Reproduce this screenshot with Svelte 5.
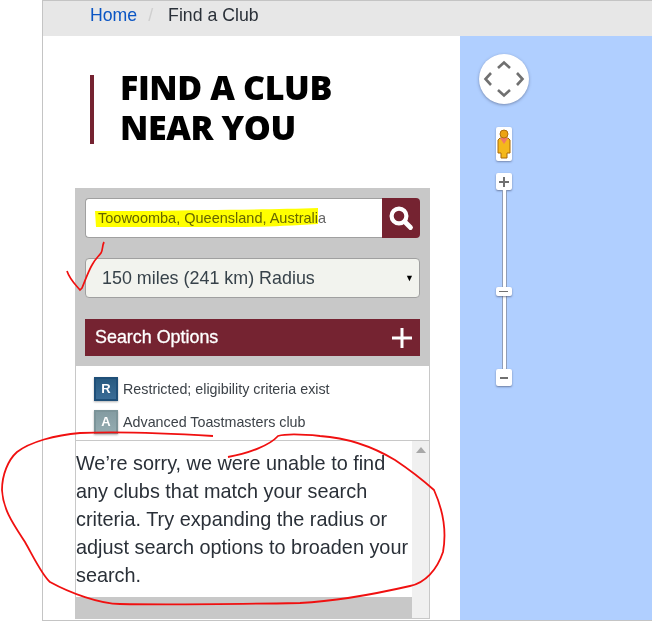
<script>
  const legend = [
    { key: 'R', text: 'Restricted; eligibility criteria exist', cls: 'blue' },
    { key: 'A', text: 'Advanced Toastmasters club', cls: 'grey' }
  ];
</script>

<div class="page">
  <nav class="crumbs">
    <a href="#home">Home</a><span class="sep">/</span><span>Find a Club</span>
  </nav>
  <div class="main">
    <section class="left">
      <h1><span>FIND A CLUB<br />NEAR YOU</span></h1>
      <div class="panel">
        <div class="search">
          <div class="input">Toowoomba, Queensland, Australia</div>
          <button class="go" aria-label="Search">
            <svg width="26" height="26" viewBox="0 0 26 26"><circle cx="11" cy="11" r="7.4" fill="none" stroke="#fff" stroke-width="4.2"/><path d="M17 17 22.5 22.5" stroke="#fff" stroke-width="4.8" stroke-linecap="round"/></svg>
          </button>
        </div>
        <div class="select"><span>150 miles (241 km) Radius</span><i>▼</i></div>
        <div class="options"><span>Search Options</span>
          <svg width="20" height="20" viewBox="0 0 20 20"><path d="M0 10H20M10 0V20" stroke="#fff" stroke-width="3"/></svg>
        </div>
      </div>
      <div class="results">
        <ul class="legend">
          {#each legend as item}
            <li><b class={item.cls}>{item.key}</b>{item.text}</li>
          {/each}
        </ul>
        <div class="scroll">
          <div class="content">
            <p>We’re sorry, we were unable to find any clubs that match your search criteria. Try expanding the radius or adjust search options to broaden your search.</p>
            <div class="strip"></div>
          </div>
          <div class="bar"><svg width="10" height="6" viewBox="0 0 10 6"><path d="M5 0 10 6H0Z" fill="#a8a8a8"/></svg></div>
        </div>
      </div>
    </section>
    <section class="map">
      <div class="pan">
        <svg width="50" height="50" viewBox="0 0 50 50" fill="none" stroke="#707070" stroke-width="2.6"><path d="M19 14 25 8.5 31 14M19 36 25 41.5 31 36M12 19 6.5 25 12 31M38 19 43.5 25 38 31"/></svg>
      </div>
      <div class="peg">
        <svg width="14" height="30" viewBox="0 0 14 30"><path d="M3 9H11L13 11V24H10V29H4V24H1V11Z" fill="#f4b81c" stroke="#a86808"/><path d="M3 9H11L7 15Z" fill="#f07868"/><circle cx="7" cy="5" r="4" fill="#eca414" stroke="#b07010"/></svg>
      </div>
      <div class="zoom">
        <div class="zbtn"><svg width="10" height="10" viewBox="0 0 10 10"><path d="M0 5H10M5 0V10" stroke="#707070" stroke-width="2"/></svg></div>
        <div class="track"><div class="thumb"><span></span></div></div>
        <div class="zbtn"><svg width="10" height="10" viewBox="0 0 10 10"><path d="M1 5H9" stroke="#707070" stroke-width="2"/></svg></div>
      </div>
    </section>
  </div>

  <svg class="ink" width="652" height="621" viewBox="0 0 652 621" fill="none">
    <path class="marker" d="M95 211C130 211 170 211 205 210C240 210 285 209 318 208V224C285 226 260 227 235 227C190 227 140 227 96 227Z" fill="#ffff00"/>
    <path d="M104 242C102 246 103 250 101 253C99 256 95 259 92 265C88 272 85 281 82 288L80 290C76 285 70 280 67 271" stroke="#f01010" stroke-width="1.7"/>
    <path d="M213 436C180 434 130 431 80 433C55 435 30 442 17 452C8 460 2 475 2 490C3 510 14 525 25 542C33 556 42 575 50 582C70 593 100 604 120 604C170 605 240 604 300 603C340 601 375 594 410 586C425 583 437 570 443 552C447 530 443 510 434 490C425 482 410 470 395 460C375 448 350 438 320 436C300 434 285 434 278 436C270 445 250 453 228 457" stroke="#f01010" stroke-width="1.8"/>
  </svg>
</div>

<style>
  :global(body) { margin: 0; background: #fff; }
  .page {
    position: relative;
    width: 652px;
    height: 621px;
    box-sizing: border-box;
    padding-left: 42px;
    overflow: hidden;
    font-family: "Liberation Sans", Arial, sans-serif;
  }
  .crumbs {
    box-sizing: border-box;
    height: 36px;
    padding: 0 0 6px 47px;
    display: flex;
    align-items: center;
    background: #e7e7e7;
    border-top: 1px solid #c4c4c4;
    border-left: 1px solid #c4c4c4;
    font-size: 17.7px;
    color: #2a3038;
  }
  .crumbs a { color: #0a55c4; text-decoration: none; }
  .sep { color: #cfcfcf; margin: 0 15px 0 11px; }
  .main {
    display: flex;
    height: 585px;
    border-left: 1px solid #c4c4c4;
    border-bottom: 1px solid #c4c4c4;
    box-sizing: border-box;
  }
  .left { width: 417px; padding-left: 32px; box-sizing: border-box; display: flow-root; }
  h1 {
    display: flow-root;
    margin: 39px 0 44px 15px;
    padding: 0 0 0 26px;
    height: 69px;
    border-left: 4px solid #752331;
    font-family: "Open Sans", sans-serif;
    font-weight: 800;
    font-size: 34px;
    line-height: 40px;
    letter-spacing: -0.4px;
    color: #000;
  }
  h1 span { display: block; margin-top: -8px; }
  .panel {
    width: 355px;
    box-sizing: border-box;
    background: #c8c8c8;
    padding: 10px;
  }
  .search { display: flex; height: 40px; }
  .input {
    flex: 1;
    box-sizing: border-box;
    background: #fff;
    border: 1px solid #a0a0a0;
    border-right: 0;
    border-radius: 4px 0 0 4px;
    padding-left: 12px;
    display: flex;
    align-items: center;
    font-size: 14.5px;
    color: #666;
  }
  .go {
    width: 38px;
    padding: 0;
    border: 0;
    border-radius: 0 4px 4px 0;
    background: #752331;
    display: flex;
    align-items: center;
    justify-content: center;
  }
  .select {
    box-sizing: border-box;
    height: 40px;
    margin-top: 20px;
    background: #f2f3ee;
    border: 1px solid #a0a0a0;
    border-radius: 4px;
    padding: 0 5px 0 16px;
    display: flex;
    align-items: center;
    justify-content: space-between;
    font-size: 17.9px;
    color: #37424a;
  }
  .select i { font-style: normal; font-size: 9px; color: #000; }
  .options {
    height: 37px;
    margin-top: 21px;
    background: #752331;
    color: #fff;
    padding: 0 8px 0 10px;
    display: flex;
    align-items: center;
    justify-content: space-between;
    font-size: 17.9px;
    -webkit-text-stroke: 0.3px #fff;
  }
  .results {
    width: 355px;
    height: 253px;
    box-sizing: border-box;
    background: #fff;
    border: 1px solid #c8c8c8;
    border-top: 0;
    display: flex;
    flex-direction: column;
  }
  .legend {
    list-style: none;
    margin: 0;
    padding: 10px 0 0 18px;
    height: 75px;
    box-sizing: border-box;
    border-bottom: 1px solid #c8c8c8;
    font-size: 14.3px;
    color: #3c4248;
  }
  .legend li { display: flex; align-items: center; height: 24px; margin-bottom: 8px; padding-top: 1px; }
  .legend b {
    width: 24px;
    height: 24px;
    box-sizing: border-box;
    margin: -1px 5px 0 0;
    display: flex;
    align-items: center;
    justify-content: center;
    font-size: 13px;
    color: #fff;
    box-shadow: 0 1px 2px rgba(0, 0, 0, .3);
  }
  .blue { background: linear-gradient(#285a80, #3a6c96); border: 2px solid #1f4f78; }
  .grey { background: linear-gradient(#849ca2, #93abb0); border: 2px solid #7c9499; }
  .scroll { flex: 1; display: flex; min-height: 0; }
  .content { width: 336px; display: flex; flex-direction: column; }
  p {
    margin: 0;
    padding-top: 8px;
    height: 156px;
    box-sizing: border-box;
    font-size: 19.85px;
    line-height: 28px;
    color: #2a3038;
  }
  .strip { height: 21px; background: #c8c8c8; margin-left: -1px; }
  .bar { flex: 1; background: #f0f0f0; display: flex; justify-content: center; padding-top: 6px; box-sizing: border-box; }
  .bar svg { display: block; }
  .map { flex: 1; background: #b0cfff; position: relative; }
  .pan {
    position: absolute;
    left: 19px;
    top: 18px;
    width: 50px;
    height: 50px;
    border-radius: 50%;
    background: #fff;
    box-shadow: 0 1px 3px rgba(60, 70, 100, .5);
  }
  .pan svg { display: block; }
  .peg {
    position: absolute;
    left: 36px;
    top: 91px;
    width: 16px;
    height: 34px;
    background: #fff;
    border-radius: 2px;
    box-shadow: 0 1px 2px rgba(60, 70, 100, .5);
    display: flex;
    align-items: center;
    justify-content: center;
  }
  .zoom {
    position: absolute;
    left: 36px;
    top: 137px;
    width: 16px;
    display: flex;
    flex-direction: column;
    align-items: center;
  }
  .zbtn {
    width: 16px;
    height: 17px;
    background: #fff;
    border-radius: 2px;
    box-shadow: 0 1px 2px rgba(60, 70, 100, .6);
    display: flex;
    align-items: center;
    justify-content: center;
    position: relative;
  }
  .track {
    position: relative;
    width: 3px;
    height: 179px;
    background: #fff;
    border-left: 1px solid #8f9db8;
    border-right: 1px solid #8f9db8;
  }
  .thumb {
    position: absolute;
    left: -7px;
    top: 97px;
    width: 16px;
    height: 9px;
    background: #fff;
    border-radius: 2px;
    box-shadow: 0 1px 2px rgba(60, 70, 100, .6);
    display: flex;
    align-items: center;
    justify-content: center;
  }
  .thumb span { width: 9px; height: 1px; background: #707070; }
  .ink { position: absolute; left: 0; top: 0; pointer-events: none; }
  .marker { mix-blend-mode: multiply; }
</style>
